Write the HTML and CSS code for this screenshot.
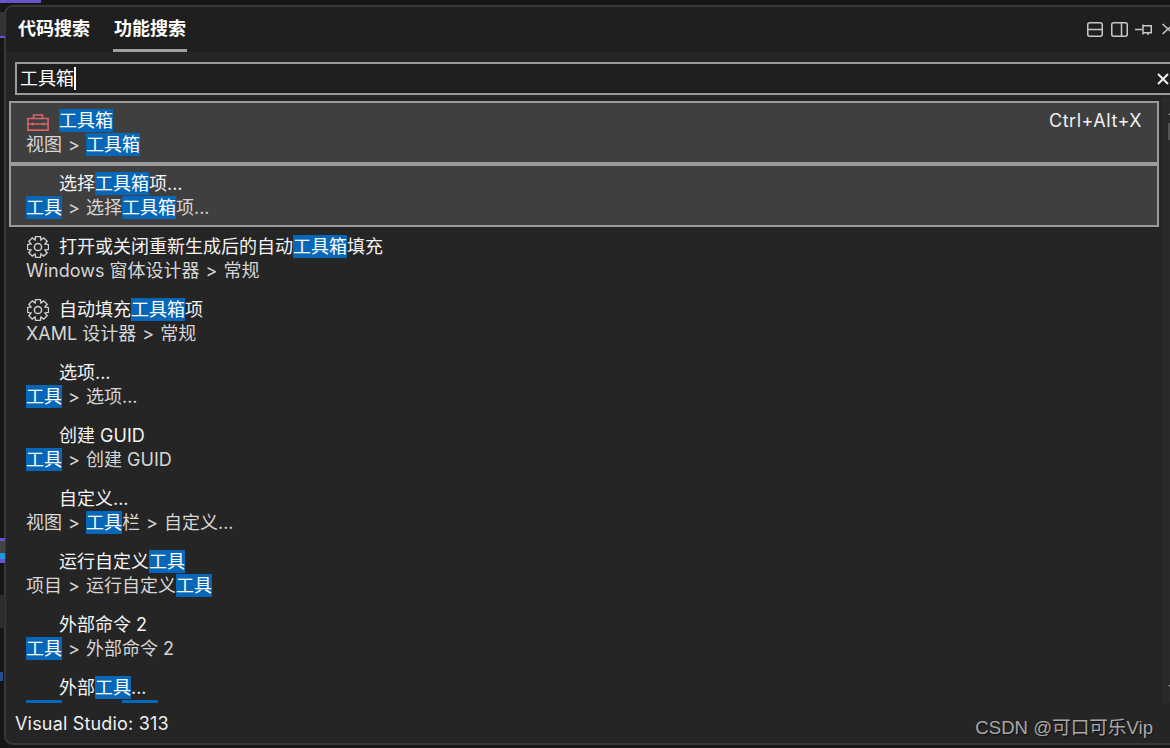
FILE: index.html

```html
<!DOCTYPE html>
<html lang="zh-CN">
<head>
    <meta charset="UTF-8">
    <title>功能搜索</title>
    <link rel="stylesheet" href="styles.css">
</head>
<body>

<svg class="defs" width="0" height="0">
    <symbol id="gear" viewBox="0 0 22 22">
        <path d="M8.57 .48L13.43 .48L13.91 3.98L16.72 1.84L20.16 5.28L18.02 8.09L21.52 8.57L21.52 13.43L18.02 13.91L20.16 16.72L16.72 20.16L13.91 18.02L13.43 21.52L8.57 21.52L8.09 18.02L5.28 20.16L1.84 16.72L3.98 13.91L.48 13.43L.48 8.57L3.98 8.09L1.84 5.28L5.28 1.84L8.09 3.98Z" fill="none" stroke="#cfcfcf" stroke-width="1.4" stroke-linejoin="miter"/>
        <circle cx="11" cy="11" r="3.6" fill="none" stroke="#cfcfcf" stroke-width="1.5"/>
    </symbol>
</svg>

<div class="desk-top"></div>
<div class="desk-mark mark-a"></div>
<div class="desk-mark mark-b"></div>
<div class="desk-mark mark-c"></div>
<div class="desk-mark mark-d"></div>

<div class="window">
    <div class="header">
        <div class="tab">代码搜索</div>
        <div class="tab active">功能搜索</div>
        <div class="tools">
            <svg width="16" height="15" viewBox="0 0 16 15"><rect x=".75" y=".75" width="14.5" height="13.5" rx="2" fill="none" stroke="#c8c8c8" stroke-width="1.5"/><path d="M1 7.5H15" stroke="#c8c8c8" stroke-width="1.5"/></svg>
            <svg width="17" height="15" viewBox="0 0 17 15"><rect x=".75" y=".75" width="15.5" height="13.5" rx="2" fill="none" stroke="#c8c8c8" stroke-width="1.5"/><path d="M10.5 1V14" stroke="#c8c8c8" stroke-width="1.5"/></svg>
            <svg class="pin" width="17" height="15" viewBox="0 0 17 15"><path d="M0 7.5H7M8 3.75H16.25V10.75H8ZM8 2.5V12.5M13 11V13" fill="none" stroke="#c8c8c8" stroke-width="1.5"/></svg>
            <svg class="close" width="14" height="14" viewBox="0 0 14 14"><path d="M1.5 2L12.5 12M12.5 2L1.5 12" stroke="#c8c8c8" stroke-width="1.5"/></svg>
        </div>
    </div>

    <div class="search">
        <span class="query">工具箱</span><span class="caret"></span>
        <svg class="clear" width="12" height="12" viewBox="0 0 12 12"><path d="M1 1L11 11M11 1L1 11" stroke="#f0f0f0" stroke-width="2"/></svg>
    </div>

    <div class="results">
        <div class="list">
            <div class="row selected">
                <div class="line-main">
                    <span class="slot">
                        <svg class="toolbox" width="22" height="17" viewBox="0 0 22 17"><path d="M6.5 4.5V1H15.5V4.5M.9 4.5H21.1V16.1H.9ZM.9 10H21.1M5.5 8.5V11.5M16.5 8.5V11.5" fill="none" stroke="#d8646c" stroke-width="1.6"/></svg>
                    </span>
                    <span class="hl">工具箱</span>
                    <span class="shortcut">Ctrl+Alt+X</span>
                </div>
                <div class="line-path">视图<span class="sep">&gt;</span><span class="hl">工具箱</span></div>
            </div>
            <div class="row selected">
                <div class="line-main"><span class="slot"></span>选择<span class="hl">工具箱</span>项...</div>
                <div class="line-path"><span class="hl">工具</span><span class="sep">&gt;</span>选择<span class="hl">工具箱</span>项...</div>
            </div>
            <div class="row">
                <div class="line-main"><span class="slot"><svg width="22" height="22"><use href="#gear"/></svg></span>打开或关闭重新生成后的自动<span class="hl">工具箱</span>填充</div>
                <div class="line-path">Windows 窗体设计器<span class="sep">&gt;</span>常规</div>
            </div>
            <div class="row">
                <div class="line-main"><span class="slot"><svg width="22" height="22"><use href="#gear"/></svg></span>自动填充<span class="hl">工具箱</span>项</div>
                <div class="line-path">XAML 设计器<span class="sep">&gt;</span>常规</div>
            </div>
            <div class="row">
                <div class="line-main"><span class="slot"></span>选项...</div>
                <div class="line-path"><span class="hl">工具</span><span class="sep">&gt;</span>选项...</div>
            </div>
            <div class="row">
                <div class="line-main"><span class="slot"></span>创建 GUID</div>
                <div class="line-path"><span class="hl">工具</span><span class="sep">&gt;</span>创建 GUID</div>
            </div>
            <div class="row">
                <div class="line-main"><span class="slot"></span>自定义...</div>
                <div class="line-path">视图<span class="sep">&gt;</span><span class="hl">工具</span>栏<span class="sep">&gt;</span>自定义...</div>
            </div>
            <div class="row">
                <div class="line-main"><span class="slot"></span>运行自定义<span class="hl">工具</span></div>
                <div class="line-path">项目<span class="sep">&gt;</span>运行自定义<span class="hl">工具</span></div>
            </div>
            <div class="row">
                <div class="line-main"><span class="slot"></span>外部命令 2</div>
                <div class="line-path"><span class="hl">工具</span><span class="sep">&gt;</span>外部命令 2</div>
            </div>
            <div class="row cut">
                <div class="line-main"><span class="slot"></span>外部<span class="hl">工具</span>...</div>
                <div class="line-path"><span class="hl">工具</span><span class="sep">&gt;</span>外部<span class="hl">工具</span>...</div>
            </div>
        </div>
        <div class="scrollbar">
            <div class="arrow-up"></div>
            <div class="thumb"></div>
            <div class="arrow-down"></div>
        </div>
    </div>

    <div class="footer">Visual Studio: 313</div>
</div>

<div class="watermark">CSDN @可口可乐Vip</div>

</body>
</html>
```

FILE: styles.css

```css
html, body {
    margin: 0;
    padding: 0;
    height: 100%;
    overflow: hidden;
}
body {
    position: relative;
    background-color: #161616;
    color: white;
    font-family: Inter, "Noto Sans CJK SC", sans-serif;
    font-size: 18px;
}
.defs {
    position: absolute;
}
.desk-top {
    position: absolute;
    top: 0;
    left: 0;
    width: 41px;
    height: 3px;
    background: #6a52c9;
}
.desk-mark {
    position: absolute;
    left: 0;
    width: 5px;
}
.mark-a {
    top: 12px;
    height: 24px;
    background: #333;
    border-bottom: 2px solid #6a52c9;
}
.mark-b {
    top: 538px;
    height: 25px;
    background: linear-gradient(#6a52c9 0 3px, #444 3px 15px, #1c97d8 15px 21px, #6a52c9 21px);
}
.mark-c {
    top: 595px;
    height: 33px;
    background: #2c2c2c;
}
.mark-d {
    top: 672px;
    width: 3px;
    height: 9px;
    background: #24508c;
}
.window {
    box-sizing: border-box;
    width: 1185px;
    height: 740px;
    margin: 5px 0 0 4px;
    border: 2px solid #383838;
    border-radius: 9px;
    background: #252525;
    overflow: hidden;
}
.header {
    display: flex;
    height: 45px;
    padding-left: 11px;
    background: #1f1f1f;
}
.tab {
    box-sizing: border-box;
    flex: none;
    height: 45px;
    margin-right: 20px;
    padding: 10px 1px 0;
    line-height: 24px;
    font-weight: 700;
    white-space: nowrap;
    border-bottom: 3px solid transparent;
}
.tab.active {
    margin-left: 2px;
    border-bottom-color: #a0a0a0;
}
.tools {
    display: flex;
    align-items: center;
    gap: 8px;
    margin-left: auto;
    padding-right: 12px;
    height: 44px;
}
.pin {
    margin-left: -1px;
}
.close {
    margin-left: 1px;
}
.search {
    box-sizing: border-box;
    display: flex;
    align-items: center;
    height: 33px;
    margin: 10px 0 3px 9px;
    padding-left: 3px;
    border: 2px solid #9c9c9c;
    background: #1e1e1e;
}
.query {
    line-height: 24px;
}
.caret {
    width: 2px;
    height: 23px;
    background: #fff;
}
.clear {
    margin-left: 1081px;
}
.results {
    display: flex;
    height: 605px;
}
.list {
    flex: none;
    width: 1150px;
    height: 602px;
    margin: 3px 0 0 3px;
    overflow: hidden;
}
.row {
    box-sizing: border-box;
    height: 63px;
    padding: 6px 0 0 15px;
    border: 2px solid transparent;
}
.row.selected {
    border-color: #9c9c9c;
    background: #3f3f3f;
}
.line-main, .line-path {
    display: flex;
    align-items: flex-start;
    height: 24px;
    line-height: 23px;
    white-space: pre;
}
.line-main {
    color: #f4f4f4;
}
.line-path {
    color: #d6d6d6;
}
/* last row is clipped by the list, only the top of the highlight shows */
.row.cut .line-path {
    line-height: 29px;
}
.slot {
    box-sizing: border-box;
    display: flex;
    align-items: center;
    flex: none;
    width: 33px;
    height: 23px;
    padding-left: 1px;
}
.toolbox {
    margin-top: 4px;
}
.hl {
    height: 23px;
    background: #0667b8;
    color: white;
}
.sep {
    flex: none;
    width: 24px;
    text-align: center;
}
.shortcut {
    margin-left: auto;
    padding-right: 15px;
    letter-spacing: 0.5px;
    color: #f0f0f0;
}
.scrollbar {
    display: flex;
    flex-direction: column;
    flex: none;
    width: 18px;
    margin-left: 3px;
    background: #2a2a2a;
}
.arrow-up, .arrow-down {
    width: 0;
    margin-left: 6px;
    border-left: 3px solid transparent;
    border-right: 3px solid transparent;
}
.arrow-up {
    margin-top: 14px;
    border-bottom: 3px solid #999;
}
.arrow-down {
    margin-top: auto;
    margin-bottom: 15px;
    border-top: 3px solid #999;
}
.thumb {
    width: 12px;
    height: 17px;
    margin: 8px 0 0 6px;
    background: #555;
}
.footer {
    padding: 9px 0 0 9px;
    line-height: 24px;
    letter-spacing: 0.18px;
    color: #f0f0f0;
}
.watermark {
    position: absolute;
    right: 17px;
    top: 716px;
    line-height: 24px;
    font-family: "Liberation Sans", "Noto Sans CJK SC", sans-serif;
    font-size: 18.6px;
    color: #a8a8a8;
    text-shadow: 1px 1px 1px #111;
}
```
